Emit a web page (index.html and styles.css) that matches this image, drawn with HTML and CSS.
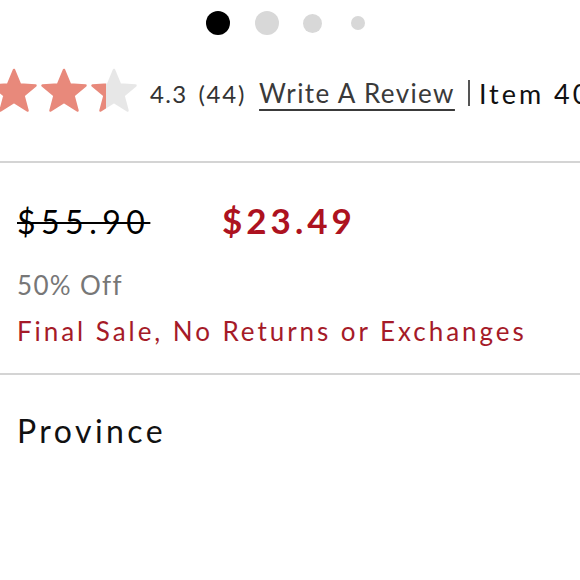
FILE: index.html
```html
<!DOCTYPE html>
<html>
<head>
<meta charset="utf-8">
<link rel="stylesheet" href="styles.css">
</head>
<body>
<div class="page">
  <div class="dots">
    <span class="dot dot-active"></span>
    <span class="dot dot-lg"></span>
    <span class="dot dot-md"></span>
    <span class="dot dot-sm"></span>
  </div>
  <div class="rating">
    <div class="stars">
      <svg class="star" viewBox="0 0 48 46"><polygon points="24,3 30,17.5 45.5,18.5 33.5,28.5 37.5,43.5 24,35 10.5,43.5 14.5,28.5 2.5,18.5 18,17.5" fill="#e8897b" stroke="#e8897b" stroke-width="2.5" stroke-linejoin="round"/></svg>
      <svg class="star" viewBox="0 0 48 46"><polygon points="24,3 30,17.5 45.5,18.5 33.5,28.5 37.5,43.5 24,35 10.5,43.5 14.5,28.5 2.5,18.5 18,17.5" fill="#e8897b" stroke="#e8897b" stroke-width="2.5" stroke-linejoin="round"/></svg>
      <svg class="star" viewBox="0 0 48 46">
        <defs><linearGradient id="part" x1="0" x2="1" y1="0" y2="0"><stop offset="0.31" stop-color="#e8897b"/><stop offset="0.31" stop-color="#e7e7e7"/></linearGradient></defs>
        <polygon points="24,3 30,17.5 45.5,18.5 33.5,28.5 37.5,43.5 24,35 10.5,43.5 14.5,28.5 2.5,18.5 18,17.5" fill="url(#part)" stroke="url(#part)" stroke-width="2.5" stroke-linejoin="round"/>
      </svg>
    </div>
    <span class="score">4.3</span>
    <span class="count">(44)</span>
    <a class="review">Write A Review</a>
    <span class="sep"></span>
    <span class="item">Item 400123456</span>
  </div>
  <div class="divider"></div>
  <div class="pricing">
    <div class="prices">
      <span class="old">$55.90</span>
      <span class="new">$23.49</span>
    </div>
    <div class="off">50% Off</div>
    <div class="final">Final Sale, No Returns or Exchanges</div>
  </div>
  <div class="divider"></div>
  <div class="province">Province</div>
</div>
</body>
</html>
```
FILE: styles.css
```css
html, body {
  margin: 0;
  padding: 0;
  background: #ffffff;
}
.page {
  width: 580px;
  height: 580px;
  overflow: hidden;
  font-family: "Lato", "Noto Sans", sans-serif;
  color: #111;
}
.dots {
  height: 46px;
  display: flex;
  align-items: center;
  padding-left: 206px;
}
.dot {
  display: block;
  border-radius: 50%;
  background: #d8d8d8;
  flex: none;
}
.dot-active {
  width: 24px;
  height: 24px;
  background: #000;
  margin-right: 25px;
}
.dot-lg {
  width: 24px;
  height: 24px;
  margin-right: 24px;
}
.dot-md {
  width: 19px;
  height: 19px;
  margin-right: 29px;
}
.dot-sm {
  width: 14px;
  height: 14px;
}
.rating {
  height: 94px;
  margin-bottom: 21px;
  display: flex;
  align-items: center;
  white-space: nowrap;
  overflow: hidden;
}
.stars {
  display: flex;
  gap: 2px;
  flex: none;
  margin-left: -10px;
  margin-top: -6px;
}
.star {
  width: 48px;
  height: 46px;
  display: block;
}
.score {
  font-size: 24px;
  color: #333;
  margin-left: 12px;
  letter-spacing: 1.3px;
}
.count {
  font-size: 24px;
  color: #333;
  margin-left: 11px;
  letter-spacing: 1.75px;
}
.review {
  font-size: 26px;
  color: #3a3a3a;
  margin-left: 13px;
  letter-spacing: 1.4px;
  text-decoration: underline;
  text-underline-offset: 6px;
  text-decoration-thickness: 2px;
}
.sep {
  width: 2px;
  height: 26px;
  background: #555;
  margin-left: 13px;
  flex: none;
}
.item {
  font-size: 27px;
  color: #111;
  margin-left: 9px;
  letter-spacing: 3px;
}
.divider {
  height: 2px;
  background: #d4d4d4;
}
.pricing {
  padding: 37px 17px 26px;
}
.prices {
  display: flex;
  align-items: baseline;
  line-height: 40px;
}
.old {
  font-size: 32px;
  color: #000;
  letter-spacing: 5.5px;
  text-decoration: line-through;
  text-decoration-thickness: 2px;
  width: 205px;
  flex: none;
}
.new {
  font-size: 35px;
  font-weight: 700;
  color: #ad1220;
  letter-spacing: 4px;
}
.off {
  font-size: 26px;
  line-height: 32px;
  color: #777;
  margin-top: 27px;
  letter-spacing: 1.35px;
}
.final {
  font-size: 26px;
  line-height: 32px;
  color: #a51a28;
  margin-top: 14px;
  letter-spacing: 2.95px;
}
.province {
  font-size: 32px;
  line-height: 40px;
  color: #111;
  letter-spacing: 3.45px;
  padding: 36px 17px 0;
}
```
